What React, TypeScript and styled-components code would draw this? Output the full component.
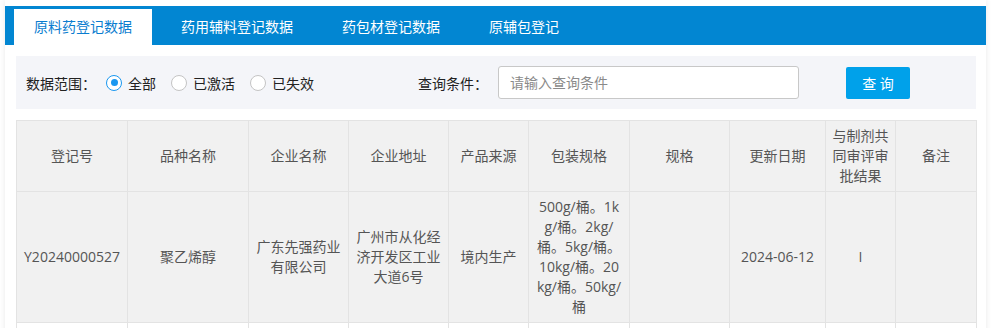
import React, { ReactElement } from "react";
import styled, { createGlobalStyle } from "styled-components";

const GlobalStyle = createGlobalStyle`
  html, body {
    margin: 0;
    padding: 0;
    background: #ffffff;
  }
  body {
    font-family: "Open Sans", "Noto Sans CJK SC", sans-serif;
    font-size: 14px;
    color: #333;
  }
`;

const Panel = styled.div`
  margin-left: 5px;
  width: 981px;
  min-height: 328px;
  padding-top: 6px;
  background: #fff;
  box-shadow: 0 0 6px rgba(0, 0, 0, 0.09);
  box-sizing: border-box;
`;

const TabBar = styled.div`
  display: flex;
  align-items: flex-end;
  height: 39px;
  padding-left: 9px;
  background: #0286d2;
`;

const Tab = styled.div<{ $active?: boolean }>`
  height: 36px;
  line-height: 36px;
  padding: 0 20px;
  margin-right: 9px;
  font-size: 14px;
  white-space: nowrap;
  cursor: pointer;
  color: ${(p) => (p.$active ? "#0a7ccf" : "#ffffff")};
  background: ${(p) => (p.$active ? "#ffffff" : "transparent")};
`;

const Content = styled.div`
  padding: 11px 10px 0 11px;
`;

const Filter = styled.div`
  display: flex;
  align-items: center;
  height: 53px;
  padding-left: 10px;
  background: #f4f5f9;
`;

const Label = styled.span<{ $gap?: number }>`
  color: #222;
  margin-left: ${(p) => p.$gap ?? 0}px;
  margin-right: 10px;
  white-space: nowrap;
`;

const RadioItem = styled.label`
  display: flex;
  align-items: center;
  gap: 6px;
  margin-right: 15px;
  color: #222;
  cursor: pointer;
`;

const RadioDot = styled.span<{ $checked?: boolean }>`
  width: 16px;
  height: 16px;
  box-sizing: border-box;
  border-radius: 50%;
  border: 1px solid ${(p) => (p.$checked ? "#1a97f0" : "#c4c4c4")};
  background: #fff;
  display: flex;
  align-items: center;
  justify-content: center;

  &::after {
    content: "";
    width: 7px;
    height: 7px;
    border-radius: 50%;
    background: ${(p) => (p.$checked ? "#1a97f0" : "transparent")};
  }
`;

const SearchInput = styled.input`
  width: 301px;
  height: 33px;
  box-sizing: border-box;
  padding: 0 11px;
  border: 1px solid #c8c8c8;
  border-radius: 3px;
  font-family: inherit;
  font-size: 14px;
  color: #333;
  outline: none;

  &::placeholder {
    color: #8a8a8a;
  }
`;

const SearchButton = styled.button`
  margin-left: 47px;
  width: 64px;
  height: 32px;
  border: none;
  border-radius: 2px;
  background: #00a1ea;
  color: #fff;
  font-family: inherit;
  font-size: 14px;
  cursor: pointer;
`;

const Table = styled.table`
  margin-top: 11px;
  width: 960px;
  table-layout: fixed;
  border-collapse: collapse;
  color: #555;
  font-size: 14px;
`;

const Th = styled.th`
  padding: 5px 6px;
  line-height: 20px;
  height: 60px;
  font-weight: normal;
  text-align: center;
  background: #f1f1f1;
  border: 1px solid #e3e3e3;
`;

const Td = styled.td<{ $shade?: boolean }>`
  padding: 5px 7px;
  line-height: 20px;
  text-align: center;
  vertical-align: middle;
  word-break: break-all;
  background: ${(p) => (p.$shade ? "#f1f1f1" : "#ffffff")};
  border: 1px solid #e3e3e3;
`;

const tabs = ["原料药登记数据", "药用辅料登记数据", "药包材登记数据", "原辅包登记"];
const columns: [string, number][] = [
  ["登记号", 111],
  ["品种名称", 121],
  ["企业名称", 100],
  ["企业地址", 100],
  ["产品来源", 80],
  ["包装规格", 101],
  ["规格", 100],
  ["更新日期", 96],
  ["与制剂共同审评审批结果", 70],
  ["备注", 81],
];
const row = [
  "Y20240000527",
  "聚乙烯醇",
  "广东先强药业有限公司",
  "广州市从化经济开发区工业大道6号",
  "境内生产",
  "500g/桶。1kg/桶。2kg/桶。5kg/桶。10kg/桶。20kg/桶。50kg/桶",
  "",
  "2024-06-12",
  "I",
  "",
];
const scopes = [
  { text: "全部", checked: true },
  { text: "已激活", checked: false },
  { text: "已失效", checked: false },
];

export default function App(): ReactElement {
  return (
    <>
      <GlobalStyle />
      <Panel>
        <TabBar>
          {tabs.map((t, i) => (
            <Tab key={t} $active={i === 0}>{t}</Tab>
          ))}
        </TabBar>
        <Content>
          <Filter>
            <Label>数据范围：</Label>
            {scopes.map((s) => (
              <RadioItem key={s.text}>
                <RadioDot $checked={s.checked} />
                {s.text}
              </RadioItem>
            ))}
            <Label $gap={89}>查询条件：</Label>
            <SearchInput placeholder="请输入查询条件" />
            <SearchButton>查 询</SearchButton>
          </Filter>
          <Table>
            <colgroup>
              {columns.map(([name, w]) => (
                <col key={name} style={{ width: w }} />
              ))}
            </colgroup>
            <thead>
              <tr>
                {columns.map(([name]) => (
                  <Th key={name}>{name}</Th>
                ))}
              </tr>
            </thead>
            <tbody>
              <tr>
                {row.map((v, i) => (
                  <Td key={i} $shade>{v}</Td>
                ))}
              </tr>
              <tr>
                {columns.map(([name]) => (
                  <Td key={name} style={{ height: 40 }} />
                ))}
              </tr>
            </tbody>
          </Table>
        </Content>
      </Panel>
    </>
  );
}
